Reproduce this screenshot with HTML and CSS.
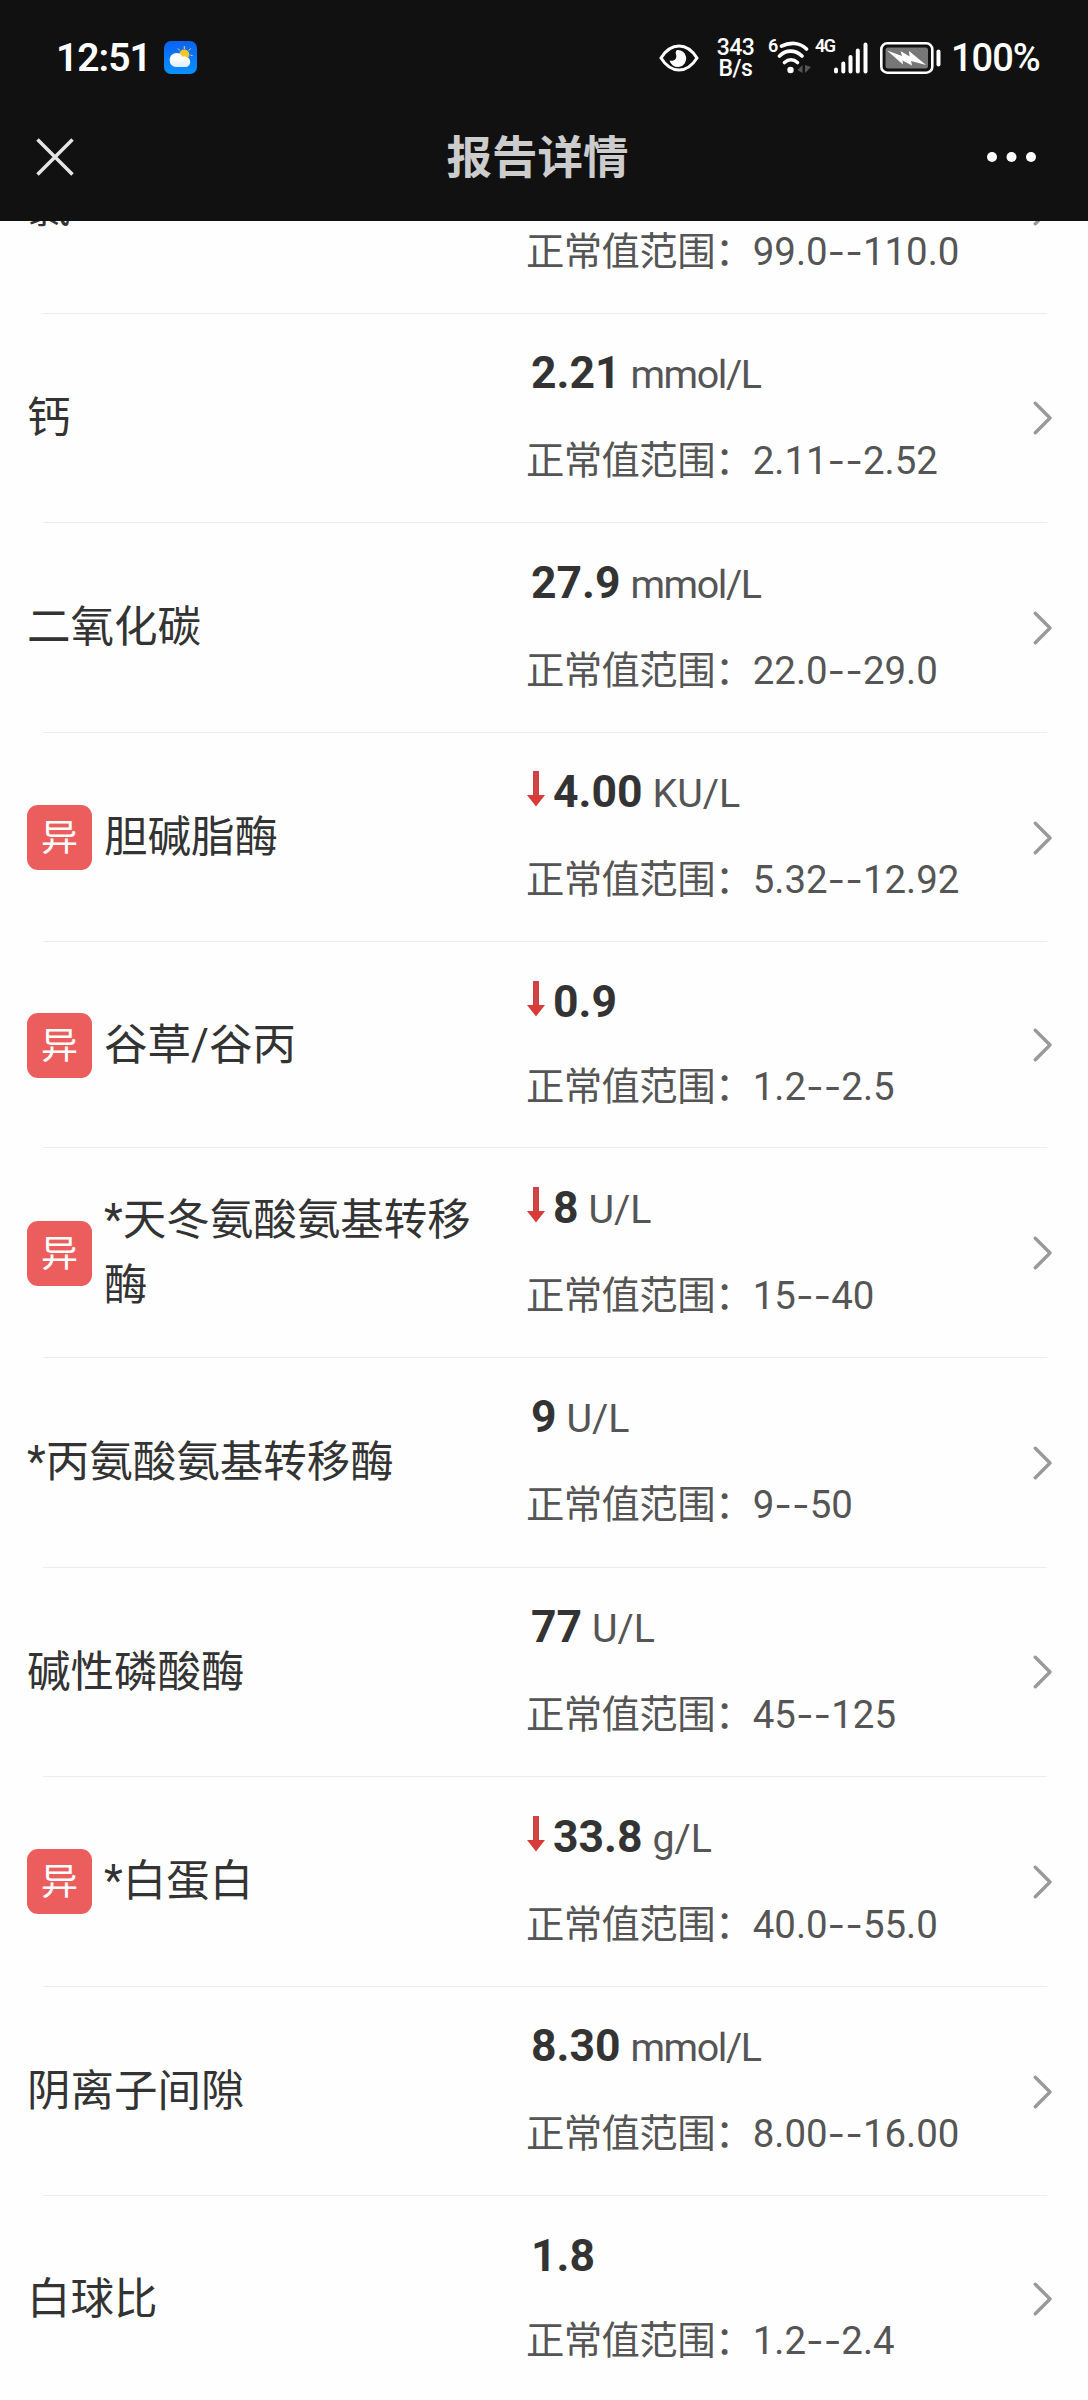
FILE: index.html
```
<!DOCTYPE html>
<html lang="zh-CN">
<head>
<meta charset="utf-8">
<title>报告详情</title>
<link rel="stylesheet" href="styles.css">
</head>
<body>

<svg class="defs" width="0" height="0">
  <symbol id="arrow" viewBox="0 0 20 36">
    <path d="M7 0h6v25H7z" fill="#cf4343"/>
    <path d="M1 24h18L10 35.500z" fill="#d93a3a"/>
  </symbol>
  <symbol id="next" viewBox="0 0 20 34">
    <path d="M2.300 2.300L17 17 2.300 31.700" fill="none" stroke="#999" stroke-width="3.400" stroke-linecap="round" stroke-linejoin="round"/>
  </symbol>
</svg>

<header class="header">
  <div class="status">
    <span class="time">12:51</span>
    <svg class="weather" width="33" height="33" viewBox="0 0 33 33">
      <defs>
        <linearGradient id="sky" x1="0" y1="0" x2="0" y2="1"><stop offset="0" stop-color="#0a62f2"/><stop offset="1" stop-color="#0a92ff"/></linearGradient>
        <linearGradient id="cloud" x1="0" y1="0" x2="0" y2="1"><stop offset="0.400" stop-color="#fff"/><stop offset="1" stop-color="#dcebfb"/></linearGradient>
      </defs>
      <rect width="33" height="33" rx="7" fill="url(#sky)"/>
      <path d="M20.300 5v3M14 7.500l1.800 2M26.600 7.500l-1.800 2M28.500 14.500l-2-.3" stroke="#ffd965" stroke-width="1"/>
      <circle cx="20.300" cy="13.500" r="5" fill="#fdc52c"/>
      <path d="M12 26a6.500 6.500 0 0 1-6.300-6.800c0-4.200 3-7.200 6.800-7.200 3 0 4.800 1.500 5.700 3.700 4.500-1 8 1.500 8 5.300 0 3-2.300 5-5 5z" fill="url(#cloud)"/>
    </svg>
    <div class="tray">
      <svg width="40" height="28" viewBox="0 0 40 28">
        <path d="M2 14C7 6 13 2 20 2s13 4 18 12c-5 8-11 12-18 12S7 22 2 14z" fill="none" stroke="#fff" stroke-width="3"/>
        <path d="M18 6a8.500 8.500 0 1 1-7.500 10.500c4.500 1.500 8-2 6.500-6-.6-1.600-.4-3.200 1-4.500z" fill="#fff"/>
      </svg>
      <div class="speed">343<br>B/s</div>
      <div class="sup wifi-gen">6</div>
      <svg class="wifi" width="36" height="34" viewBox="0 0 36 34">
        <g fill="none" stroke="#fff" stroke-width="3.600" stroke-linecap="round">
          <path d="M4.500 5.200C13 .8 23 1.500 29.500 8"/>
          <path d="M2.500 15C9 8.500 18 8.500 25 15"/>
          <path d="M7.500 21.500c4-3.500 9-3.500 13 0"/>
        </g>
        <circle cx="13.500" cy="29" r="3.200" fill="#fff"/>
        <path d="M25.500 24v8l-5-3zM28 32v-8l6 2z" fill="#555"/>
      </svg>
      <div class="sup gen">4G</div>
      <svg class="bars" width="34" height="32" viewBox="0 0 34 32">
        <path d="M2 27.500v2M9.300 21.500v8M16.500 15v14.500M23.800 8.500v21M31.500 2.500v27" stroke="#fff" stroke-width="4" stroke-linecap="round"/>
      </svg>
      <svg class="battery" width="62" height="32" viewBox="0 0 62 32">
        <rect x="1.300" y="1.300" width="51" height="29.400" rx="6" fill="none" stroke="#fff" stroke-width="2.600"/>
        <rect x="5.500" y="5.500" width="42.500" height="21" rx="2.500" fill="#777"/>
        <path d="M7 8.500l15 5.500-1.500-5 9 5.500-.5-5.500L46 23l-15-4 1 4.500-9.500-5 .5 4z" fill="#fff"/>
        <path d="M58.500 9.500v13" stroke="#fff" stroke-width="4" stroke-linecap="round"/>
      </svg>
      <span class="percent">100%</span>
    </div>
  </div>
  <div class="nav">
    <svg width="38" height="38" viewBox="0 0 38 38">
      <path d="M1.500 1.500l35 35M36.500 1.500l-35 35" stroke="#e5e5e5" stroke-width="3.500"/>
    </svg>
    <h1 class="title">报告详情</h1>
    <svg width="50" height="10" viewBox="0 0 50 10">
      <g fill="#fff"><circle cx="5" cy="5" r="5"/><circle cx="24.500" cy="5" r="5"/><circle cx="44" cy="5" r="5"/></g>
    </svg>
  </div>
</header>

<main class="list">
  <!-- scrolled halfway under the header -->
  <div class="row">
    <div class="name">氯</div>
    <div class="detail">
      <div class="value"></div>
      <div class="range"><span>正常值范围：</span>99.0<i>--</i>110.0</div>
    </div>
    <svg class="next"><use href="#next"/></svg>
  </div>

  <div class="row">
    <div class="name">钙</div>
    <div class="detail">
      <div class="value"><b>2.21</b> <span class="unit mmol">mmol/L</span></div>
      <div class="range"><span>正常值范围：</span>2.11<i>--</i>2.52</div>
    </div>
    <svg class="next"><use href="#next"/></svg>
  </div>

  <div class="row">
    <div class="name">二氧化碳</div>
    <div class="detail">
      <div class="value"><b>27.9</b> <span class="unit mmol">mmol/L</span></div>
      <div class="range"><span>正常值范围：</span>22.0<i>--</i>29.0</div>
    </div>
    <svg class="next"><use href="#next"/></svg>
  </div>

  <div class="row">
    <div class="badge">异</div>
    <div class="name">胆碱脂酶</div>
    <div class="detail">
      <div class="value low"><svg class="arrow"><use href="#arrow"/></svg><b>4.00</b> <span class="unit">KU/L</span></div>
      <div class="range"><span>正常值范围：</span>5.32<i>--</i>12.92</div>
    </div>
    <svg class="next"><use href="#next"/></svg>
  </div>

  <div class="row no-unit">
    <div class="badge">异</div>
    <div class="name">谷草/谷丙</div>
    <div class="detail">
      <div class="value low"><svg class="arrow"><use href="#arrow"/></svg><b>0.9</b></div>
      <div class="range"><span>正常值范围：</span>1.2<i>--</i>2.5</div>
    </div>
    <svg class="next"><use href="#next"/></svg>
  </div>

  <div class="row">
    <div class="badge">异</div>
    <div class="name">*天冬氨酸氨基转移酶</div>
    <div class="detail">
      <div class="value low"><svg class="arrow"><use href="#arrow"/></svg><b>8</b> <span class="unit">U/L</span></div>
      <div class="range"><span>正常值范围：</span>15<i>--</i>40</div>
    </div>
    <svg class="next"><use href="#next"/></svg>
  </div>

  <div class="row">
    <div class="name">*丙氨酸氨基转移酶</div>
    <div class="detail">
      <div class="value"><b>9</b> <span class="unit">U/L</span></div>
      <div class="range"><span>正常值范围：</span>9<i>--</i>50</div>
    </div>
    <svg class="next"><use href="#next"/></svg>
  </div>

  <div class="row">
    <div class="name">碱性磷酸酶</div>
    <div class="detail">
      <div class="value"><b>77</b> <span class="unit">U/L</span></div>
      <div class="range"><span>正常值范围：</span>45<i>--</i>125</div>
    </div>
    <svg class="next"><use href="#next"/></svg>
  </div>

  <div class="row">
    <div class="badge">异</div>
    <div class="name">*白蛋白</div>
    <div class="detail">
      <div class="value low"><svg class="arrow"><use href="#arrow"/></svg><b>33.8</b> <span class="unit">g/L</span></div>
      <div class="range"><span>正常值范围：</span>40.0<i>--</i>55.0</div>
    </div>
    <svg class="next"><use href="#next"/></svg>
  </div>

  <div class="row">
    <div class="name">阴离子间隙</div>
    <div class="detail">
      <div class="value"><b>8.30</b> <span class="unit mmol">mmol/L</span></div>
      <div class="range"><span>正常值范围：</span>8.00<i>--</i>16.00</div>
    </div>
    <svg class="next"><use href="#next"/></svg>
  </div>

  <div class="row no-unit">
    <div class="name">白球比</div>
    <div class="detail">
      <div class="value"><b>1.8</b></div>
      <div class="range"><span>正常值范围：</span>1.2<i>--</i>2.4</div>
    </div>
    <svg class="next"><use href="#next"/></svg>
  </div>
</main>

</body>
</html>
```
FILE: styles.css
```
* {
    box-sizing: border-box;
}

body {
    margin: 0;
    height: 2400px;
    overflow: hidden;
    display: flex;
    flex-direction: column;
    background: #fefefe;
    color: #333;
    font-family: Roboto, "Noto Sans CJK SC", sans-serif;
}

.defs {
    position: absolute;
}

/* header */

.header {
    flex: none;
    height: 221px;
    background: #111;
    color: #fff;
}

.status {
    display: flex;
    align-items: center;
    height: 115px;
    padding: 0 47px 0 56px;
}

.time {
    width: 108px;
    font-size: 39px;
    font-weight: 600;
    letter-spacing: -1px;
}

.tray {
    display: flex;
    align-items: center;
    margin-left: auto;
}

.speed {
    width: 39px;
    margin-left: 17px;
    font-size: 23px;
    font-weight: 500;
    line-height: 21px;
    letter-spacing: -0.500px;
    text-align: center;
}

.sup {
    align-self: flex-start;
    font-size: 18px;
    font-weight: 600;
    line-height: 20px;
}

.wifi-gen {
    width: 9px;
    margin-left: 13px;
}

.gen {
    width: 19px;
    margin-left: 2px;
    letter-spacing: -1.500px;
}

.battery {
    margin-left: 12px;
}

.percent {
    width: 90px;
    margin-left: 9px;
    font-size: 38px;
    font-weight: 500;
    letter-spacing: -1px;
}

.nav {
    display: flex;
    align-items: center;
    justify-content: space-between;
    height: 84px;
    padding: 0 51px 0 36px;
}

.title {
    margin: 3px 0 0 14px;
    color: #ccc;
    font-size: 45.500px;
    line-height: 60px;
}

/* results */

.list {
    flex: 1;
    min-height: 0;
    overflow: hidden;
}

.row {
    display: flex;
    align-items: center;
    height: 209.600px;
    padding: 0 35px 0 27px;
    background: linear-gradient(#ececec, #ececec) 43px 100% / 1004px 1px no-repeat;
}

.row:first-child {
    margin-top: -117px;
}

.no-unit {
    height: 206px;
}

.badge {
    flex: none;
    width: 65px;
    height: 65px;
    margin-right: 12px;
    border-radius: 11px;
    background: #ec5e5e;
    color: #fff;
    font-size: 37px;
    line-height: 68px;
    text-align: center;
}

.name {
    flex: 1;
    padding-right: 38px;
    font-size: 43.500px;
    line-height: 65px;
}

.detail {
    flex: none;
    align-self: flex-start;
    width: 507px;
    padding-top: 26.500px;
}

.value {
    height: 91px;
    padding-left: 5px;
    line-height: 66px;
    white-space: nowrap;
}

.value b {
    font-size: 44.500px;
}

.low {
    padding-left: 0;
}

.no-unit .value {
    height: 88.500px;
}

.arrow {
    width: 20px;
    height: 36px;
    margin-right: 7px;
}

.unit {
    margin-left: 6px;
    color: #555;
    font-size: 39.400px;
}

.mmol {
    letter-spacing: -1.400px;
}

.range {
    color: #555;
    font-size: 38.400px;
    line-height: 58px;
    white-space: nowrap;
}

.range span {
    letter-spacing: -0.600px;
}

.range i {
    font-family: Inter, sans-serif;
    font-style: normal;
}

.next {
    flex: none;
    width: 20px;
    height: 34px;
}
```
